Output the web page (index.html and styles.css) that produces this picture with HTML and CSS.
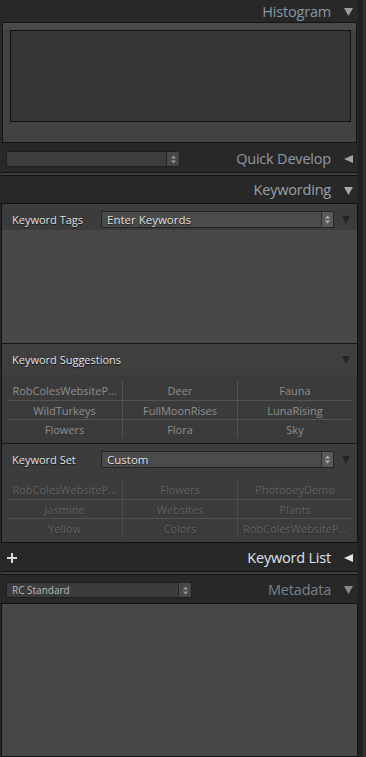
FILE: index.html
```
<!DOCTYPE html>
<html>
<head>
<meta charset="utf-8">
<link rel="stylesheet" href="styles.css">
</head>
<body>
<div class="app">
  <div class="col">
    <div class="ph ph-histo">
      <span class="ph-title t-histo">Histogram</span>
      <svg class="tri" width="9" height="8" viewBox="0 0 9 8"><polygon points="0,0 9,0 4.5,8" fill="#9c9c9c"/></svg>
    </div>
    <div class="histo"><div class="histo-inner"></div></div>

    <div class="ph ph-qd">
      <div class="sel sel-qd"><span class="sel-text"></span><span class="step"><svg width="5" height="9" viewBox="0 0 5 9"><polygon points="0,3.5 2.5,0.5 5,3.5" fill="#9a9a9a"/><polygon points="0,5.5 2.5,8.5 5,5.5" fill="#9a9a9a"/></svg></span></div>
      <span class="ph-title t-qd">Quick Develop</span>
      <svg class="tri" width="9" height="8" viewBox="0 0 9 8"><polygon points="9,0 9,8 0,4" fill="#a4a4a4"/></svg>
    </div>
    <div class="sep"></div>

    <div class="ph ph-kw">
      <span class="ph-title t-kw">Keywording</span>
      <svg class="tri" width="9" height="8" viewBox="0 0 9 8"><polygon points="0,0 9,0 4.5,8" fill="#a6a6a6"/></svg>
    </div>

    <div class="panel">
      <div class="kw-row kw-tags">
        <span class="lbl">Keyword Tags</span>
        <div class="sel sel-kw"><span class="sel-text">Enter Keywords</span><span class="step"><svg width="5" height="9" viewBox="0 0 5 9"><polygon points="0,3.5 2.5,0.5 5,3.5" fill="#b0b0b0"/><polygon points="0,5.5 2.5,8.5 5,5.5" fill="#b0b0b0"/></svg></span></div>
        <svg class="tri-s" width="8" height="8" viewBox="0 0 8 8"><polygon points="0,0 8,0 4,8" fill="#252525"/></svg>
      </div>
      <div class="kw-area"></div>

      <div class="sub-head">
        <span class="lbl">Keyword Suggestions</span>
        <svg class="tri-s" width="8" height="8" viewBox="0 0 8 8"><polygon points="0,0 8,0 4,8" fill="#252525"/></svg>
      </div>
      <div class="grid-wrap">
        <div class="grid">
          <div class="cell">RobColesWebsiteP…</div>
          <div class="cell">Deer</div>
          <div class="cell">Fauna</div>
          <div class="cell">WildTurkeys</div>
          <div class="cell">FullMoonRises</div>
          <div class="cell">LunaRising</div>
          <div class="cell">Flowers</div>
          <div class="cell">Flora</div>
          <div class="cell">Sky</div>
        </div>
      </div>

      <div class="set-block">
        <div class="kw-row kw-set">
          <span class="lbl">Keyword Set</span>
          <div class="sel sel-kw"><span class="sel-text">Custom</span><span class="step"><svg width="5" height="9" viewBox="0 0 5 9"><polygon points="0,3.5 2.5,0.5 5,3.5" fill="#b0b0b0"/><polygon points="0,5.5 2.5,8.5 5,5.5" fill="#b0b0b0"/></svg></span></div>
          <svg class="tri-s" width="8" height="8" viewBox="0 0 8 8"><polygon points="0,0 8,0 4,8" fill="#252525"/></svg>
        </div>
        <div class="grid grid-dim">
          <div class="cell">RobColesWebsiteP…</div>
          <div class="cell">Flowers</div>
          <div class="cell">PhotooeyDemo</div>
          <div class="cell">Jasmine</div>
          <div class="cell">Websites</div>
          <div class="cell">Plants</div>
          <div class="cell">Yellow</div>
          <div class="cell">Colors</div>
          <div class="cell">RobColesWebsiteP…</div>
        </div>
      </div>
    </div>

    <div class="ph ph-kl">
      <svg class="plus" width="10" height="10" viewBox="0 0 10 10"><rect x="4" y="0" width="2" height="10" fill="#d8d8d8"/><rect x="0" y="4" width="10" height="2" fill="#d8d8d8"/></svg>
      <span class="ph-title t-kl">Keyword List</span>
      <svg class="tri" width="9" height="8" viewBox="0 0 9 8"><polygon points="9,0 9,8 0,4" fill="#e6e6e6"/></svg>
    </div>
    <div class="sep"></div>

    <div class="ph ph-md">
      <div class="sel sel-md"><span class="sel-text">RC Standard</span><span class="step"><svg width="5" height="9" viewBox="0 0 5 9"><polygon points="0,3.5 2.5,0.5 5,3.5" fill="#9a9a9a"/><polygon points="0,5.5 2.5,8.5 5,5.5" fill="#9a9a9a"/></svg></span></div>
      <span class="ph-title t-md">Metadata</span>
      <svg class="tri" width="9" height="8" viewBox="0 0 9 8"><polygon points="0,0 9,0 4.5,8" fill="#8a8a8a"/></svg>
    </div>
    <div class="meta"></div>
  </div>
  <div class="rail"></div>
</div>
</body>
</html>
```

FILE: styles.css
```
* { box-sizing: border-box; margin: 0; padding: 0; }
html, body { background: #282828; }
body {
  margin: 0;
  width: 366px;
  height: 757px;
  overflow: hidden;
  font-family: "Open Sans", "Noto Sans", sans-serif;
}
.app { display: flex; height: 757px; }
.col { width: 358px; display: flex; flex-direction: column; }
.rail {
  flex: 1;
  background: #303030;
  box-shadow: inset 5px 0 0 #202020;
}

/* panel headers */
.ph {
  display: flex;
  align-items: center;
  justify-content: flex-end;
  padding-right: 5px;
  font-size: 14.5px;
  line-height: 1;
}
.ph-title { letter-spacing: -0.2px; }
.tri { margin-left: 13px; flex: none; }
.ph-histo { height: 22px; padding-top: 2px; }
.t-histo { color: #8996a6; }
.ph-qd { height: 29px; padding-top: 3px; }
.t-qd { color: #8f99a4; }
.ph-kw { height: 27px; padding-top: 2px; }
.t-kw { color: #9ba2ab; }
.ph-kl { height: 28px; padding-top: 2px; }
.t-kl { color: #dde4ec; }
.ph-md { height: 28px; padding-top: 2px; }
.t-md { color: #78828c; }

.plus { margin-left: 7px; margin-right: auto; }

/* histogram */
.histo {
  margin-left: 2px;
  width: 355px;
  height: 121px;
  border: 1px solid #141414;
  background: linear-gradient(#494949 0, #494949 7px, #424242 7px);
  padding: 7px 5px 0 7px;
}
.histo-inner {
  height: 92px;
  border: 1px solid #101010;
  background: #363636;
}

/* selects */
.sel {
  display: flex;
  align-items: stretch;
  border: 1px solid #1f1f1f;
  font-size: 11px;
  line-height: 1;
}
.sel-text {
  flex: 1;
  display: flex;
  align-items: center;
  white-space: nowrap;
  overflow: hidden;
}
.step {
  flex: none;
  width: 13px;
  display: flex;
  align-items: center;
  justify-content: center;
  border-left: 1px solid #262626;
}
.sel-qd {
  width: 174px;
  height: 16px;
  margin-left: 6px;
  margin-right: auto;
  background: #3d3d3d;
}
.sel-qd .step { background: #464646; }
.sel-md {
  width: 186px;
  height: 16px;
  margin-left: 6px;
  margin-right: auto;
  background: #3c3c3c;
}
.sel-md .sel-text { padding-left: 5px; font-size: 10px; color: #b8b8b8; }
.sel-md .step { background: #484848; }

.sep {
  margin-left: 1px;
  width: 357px;
  height: 4px;
  border-top: 1px solid #121212;
  border-bottom: 1px solid #121212;
  background: #3e3e3e;
}

/* keywording panel */
.panel {
  margin-left: 1px;
  width: 357px;
  height: 340px;
  border: 1px solid #121212;
  background: #3c3c3c;
  display: flex;
  flex-direction: column;
}
.lbl {
  font-size: 11px;
  color: #e2e2e2;
  text-shadow: 0 1px 1px #111;
  line-height: 1;
}
.kw-row {
  display: flex;
  align-items: center;
  padding-left: 10px;
}
.kw-row .lbl { width: 89px; flex: none; }
.kw-tags { height: 26px; background: #3c3c3c; padding-top: 5px; }
.sel-kw {
  width: 233px;
  height: 17px;
  background: #4b4b4b;
  border-color: #232323;
}
.sel-kw .sel-text {
  padding-left: 5px;
  color: #e0e0e0;
  font-size: 11.5px;
  text-shadow: 0 1px 1px #1a1a1a;
}
.sel-kw .step { background: #5a5a5a; border-left-color: #2a2a2a; width: 12px; }
.tri-s { margin-left: 8px; flex: none; }

.kw-area {
  height: 114px;
  background: #484848;
  border-bottom: 1px solid #141414;
}
.sub-head {
  height: 31px;
  display: flex;
  align-items: center;
  justify-content: space-between;
  padding-left: 10px;
  padding-right: 7px;
  background: #3f3f3f;
}
.grid-wrap {
  padding: 6px 4px 5px 5px;
  background: #3b3b3b;
  border-bottom: 1px solid #141414;
}
.grid {
  display: grid;
  grid-template-columns: 115px 115px 115px;
  grid-auto-rows: 19px;
}
.cell {
  display: flex;
  align-items: center;
  justify-content: center;
  font-size: 11px;
  color: #8e8e8e;
  white-space: nowrap;
  overflow: hidden;
  border-top: 1px solid #535353;
  border-left: 1px solid #535353;
}
.cell:nth-child(-n+3) { border-top: none; }
.cell:nth-child(3n+1) { border-left: none; }

.set-block {
  flex: 1;
  background: #3c3c3c;
  padding: 0 4px 0 0;
}
.kw-set { height: 31px; padding-top: 0; }
.set-block .grid { margin: 5px 0 0 5px; }
.grid-dim .cell { color: #626262; border-color: #4f4f4f; text-shadow: 0 1px 1px #303030; }

/* metadata */
.meta {
  margin-left: 1px;
  width: 357px;
  flex: 1;
  border: 1px solid #111;
  background: #474747;
}
```
